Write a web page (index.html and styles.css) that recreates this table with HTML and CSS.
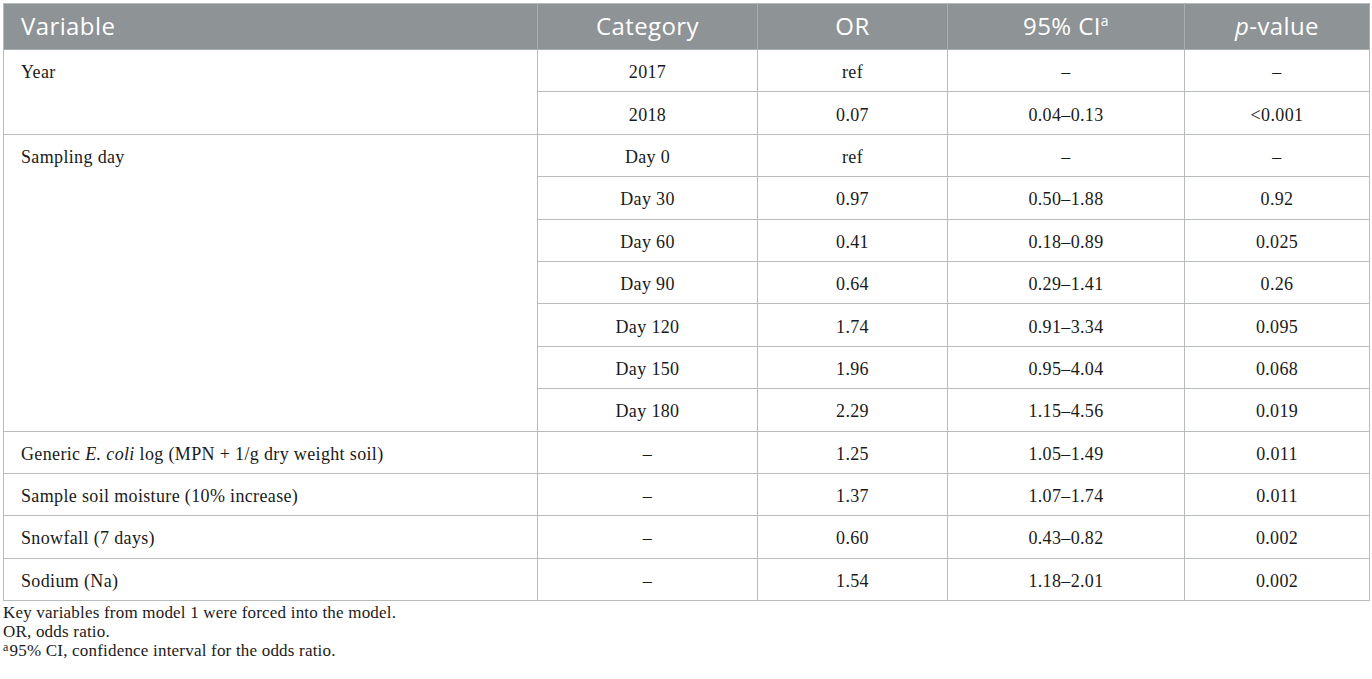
FILE: index.html
```html
<!DOCTYPE html>
<html>
<head>
<meta charset="utf-8">
<link rel="stylesheet" href="styles.css">
</head>
<body>
<div class="wrap">
<table class="tbl">
  <colgroup>
    <col class="c1"><col class="c2"><col class="c3"><col class="c4"><col class="c5">
  </colgroup>
  <thead>
    <tr>
      <th class="left">Variable</th>
      <th>Category</th>
      <th>OR</th>
      <th>95% CI<sup>a</sup></th>
      <th><i>p</i>-value</th>
    </tr>
  </thead>
  <tbody>
    <tr><td class="left" rowspan="2">Year</td><td>2017</td><td>ref</td><td>–</td><td>–</td></tr>
    <tr><td>2018</td><td>0.07</td><td>0.04–0.13</td><td>&lt;0.001</td></tr>
    <tr><td class="left" rowspan="7">Sampling day</td><td>Day 0</td><td>ref</td><td>–</td><td>–</td></tr>
    <tr><td>Day 30</td><td>0.97</td><td>0.50–1.88</td><td>0.92</td></tr>
    <tr><td>Day 60</td><td>0.41</td><td>0.18–0.89</td><td>0.025</td></tr>
    <tr><td>Day 90</td><td>0.64</td><td>0.29–1.41</td><td>0.26</td></tr>
    <tr><td>Day 120</td><td>1.74</td><td>0.91–3.34</td><td>0.095</td></tr>
    <tr><td>Day 150</td><td>1.96</td><td>0.95–4.04</td><td>0.068</td></tr>
    <tr><td>Day 180</td><td>2.29</td><td>1.15–4.56</td><td>0.019</td></tr>
    <tr><td class="left">Generic <i>E. coli</i> log (MPN + 1/g dry weight soil)</td><td>–</td><td>1.25</td><td>1.05–1.49</td><td>0.011</td></tr>
    <tr><td class="left">Sample soil moisture (10% increase)</td><td>–</td><td>1.37</td><td>1.07–1.74</td><td>0.011</td></tr>
    <tr><td class="left">Snowfall (7 days)</td><td>–</td><td>0.60</td><td>0.43–0.82</td><td>0.002</td></tr>
    <tr><td class="left">Sodium (Na)</td><td>–</td><td>1.54</td><td>1.18–2.01</td><td>0.002</td></tr>
  </tbody>
</table>
<div class="notes">
  <p>Key variables from model 1 were forced into the model.</p>
  <p>OR, odds ratio.</p>
  <p><sup>a</sup>95% CI, confidence interval for the odds ratio.</p>
</div>
</div>
</body>
</html>
```
FILE: styles.css
```css
html, body {
  margin: 0;
  padding: 0;
  background: #ffffff;
}
.wrap {
  padding: 3px 3px 0 3px;
}
.tbl {
  width: 1366px;
  border-collapse: collapse;
  table-layout: fixed;
  font-family: "Liberation Serif", "Times New Roman", serif;
  font-size: 18px;
  letter-spacing: 0.35px;
  line-height: 20px;
  color: #1a1a1a;
}
.c1 { width: 534px; }
.c2 { width: 220px; }
.c3 { width: 190px; }
.c4 { width: 237px; }
.c5 { width: 185px; }
.tbl th {
  background: #8e9395;
  color: #ffffff;
  font-family: "Open Sans", "Liberation Sans", sans-serif;
  font-weight: 400;
  font-size: 24px;
  letter-spacing: 0.4px;
  line-height: 30px;
  height: 46px;
  padding: 0 0 1px 0;
  text-align: center;
  border: 1px solid #a9adaf;
  border-top-color: #b9bdbd;
  box-sizing: border-box;
}
.tbl th.left {
  text-align: left;
  padding-left: 17px;
  border-left-color: #b9bdbd;
}
.tbl th sup {
  font-size: 14px;
  vertical-align: 9px;
  line-height: 0;
}
.tbl td {
  border: 1px solid #b9bcbc;
  height: 42.4px;
  padding: 3px 0 0 0;
  text-align: center;
  vertical-align: middle;
  box-sizing: border-box;
}
.tbl td.left {
  text-align: left;
  padding-left: 17px;
}
.tbl td[rowspan] {
  vertical-align: top;
  padding-top: 12px;
}
.notes {
  font-family: "Liberation Serif", "Times New Roman", serif;
  font-size: 17px;
  letter-spacing: 0.2px;
  color: #1a1a1a;
  padding-top: 2px;
}
.notes p {
  margin: 0;
  line-height: 19px;
}
.notes sup {
  font-size: 12px;
  vertical-align: 5px;
  line-height: 0;
  margin-right: 1px;
}
```
